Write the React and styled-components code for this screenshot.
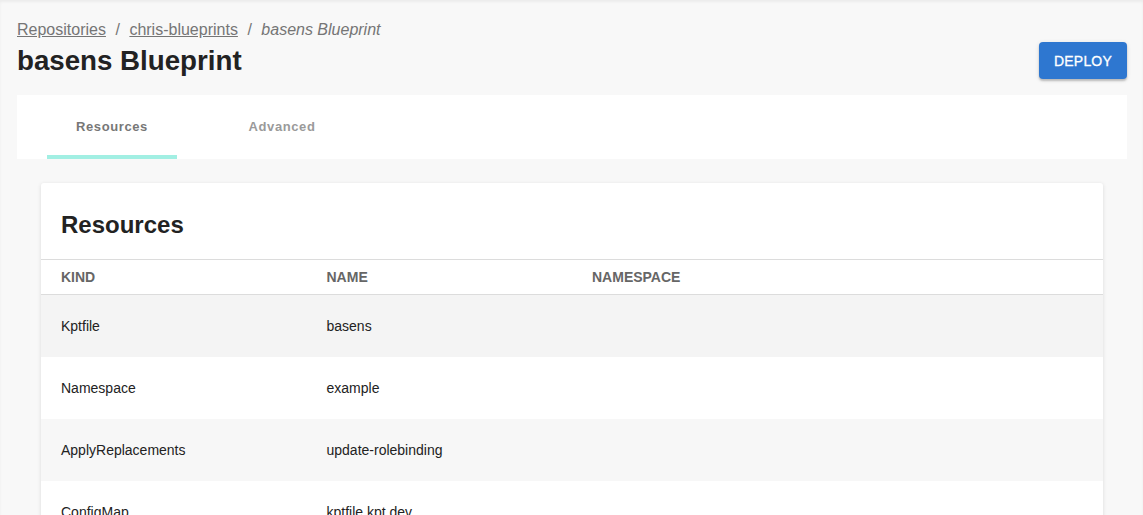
import React from 'react';
import styled, { createGlobalStyle } from 'styled-components';

const GlobalStyle = createGlobalStyle`
    body {
        margin: 0;
        background: #f8f8f8;
        font-family: 'Liberation Sans', Arial, sans-serif;
        color: #222;
    }
`;

const resources = [
    { kind: 'Kptfile', name: 'basens', namespace: '' },
    { kind: 'Namespace', name: 'example', namespace: '' },
    { kind: 'ApplyReplacements', name: 'update-rolebinding', namespace: '' },
    { kind: 'ConfigMap', name: 'kptfile.kpt.dev', namespace: '' },
    { kind: 'RoleBinding', name: 'app-admin', namespace: 'example' },
];

const App = () => {
    return (
        <>
            <GlobalStyle />
            <Page>
                <Breadcrumbs>
                    <Crumb href="#">Repositories</Crumb>
                    <Divider>/</Divider>
                    <Crumb href="#">chris-blueprints</Crumb>
                    <Divider>/</Divider>
                    <Current>basens Blueprint</Current>
                </Breadcrumbs>
                <TitleRow>
                    <Title>basens Blueprint</Title>
                    <DeployButton>Deploy</DeployButton>
                </TitleRow>

                <TabBar>
                    <Tab active>Resources</Tab>
                    <Tab>Advanced</Tab>
                </TabBar>

                <Content>
                    <Card>
                        <CardHeading>Resources</CardHeading>
                        <Table>
                            <thead>
                                <tr>
                                    <HeadCell>Kind</HeadCell>
                                    <HeadCell>Name</HeadCell>
                                    <HeadCell>Namespace</HeadCell>
                                    <HeadCell />
                                </tr>
                            </thead>
                            <tbody>
                                {resources.map((r, i) => (
                                    <Row key={r.kind + r.name} hovered={i === 0}>
                                        <Cell>{r.kind}</Cell>
                                        <Cell>{r.name}</Cell>
                                        <Cell>{r.namespace}</Cell>
                                        <Cell />
                                    </Row>
                                ))}
                            </tbody>
                        </Table>
                    </Card>
                </Content>
            </Page>
        </>
    );
};

export default App;

const Page = styled.div`
    min-height: 100vh;
    padding: 20px 16px 0 17px;
    box-sizing: border-box;
    box-shadow: inset 0 2px 3px rgba(0, 0, 0, 0.05);
`;

const Breadcrumbs = styled.div`
    display: flex;
    align-items: center;
    font-size: 16px;
    line-height: 20px;
    color: #757575;
`;

const Crumb = styled.a`
    color: #757575;
    text-decoration: underline;
`;

const Divider = styled.span`
    margin: 0 9.5px;
`;

const Current = styled.span`
    font-style: italic;
`;

const TitleRow = styled.div`
    display: flex;
    align-items: center;
    justify-content: space-between;
    margin: 2px 0 16px;
`;

const Title = styled.h1`
    margin: 0;
    font-size: 27.7px;
    line-height: 32px;
    font-weight: 700;
    color: #222;
`;

const DeployButton = styled.button`
    width: 88px;
    height: 37px;
    padding: 0;
    border: none;
    border-radius: 4px;
    background: #2e77d0;
    color: #fff;
    font-family: 'Liberation Sans', Arial, sans-serif;
    font-size: 14px;
    letter-spacing: 0.2px;
    -webkit-text-stroke: 0.3px #fff;
    text-transform: uppercase;
    box-shadow: 0 2px 2px rgba(0, 0, 0, 0.2), 0 1px 5px rgba(0, 0, 0, 0.1);
    cursor: pointer;
`;

const TabBar = styled.div`
    display: flex;
    gap: 40px;
    height: 64px;
    padding-left: 30px;
    background: #fff;
`;

const Tab = styled.div`
    width: 130px;
    display: flex;
    align-items: center;
    justify-content: center;
    box-sizing: border-box;
    padding-top: 3px;
    font-size: 13px;
    font-weight: 700;
    letter-spacing: 0.6px;
    color: ${pr => pr.active ? '#777' : '#9a9a9a'};
    border-bottom: 4px solid ${pr => pr.active ? '#a2efe3' : 'transparent'};
`;

const Content = styled.div`
    padding: 24px 24px 0;
`;

const Card = styled.div`
    background: #fff;
    border-radius: 3px;
    box-shadow: 0 1px 4px rgba(0, 0, 0, 0.12);
    overflow: hidden;
`;

const CardHeading = styled.h2`
    margin: 0;
    padding: 24px 20px 16px;
    font-size: 24px;
    line-height: 36px;
    font-weight: 700;
    color: #222;
`;

const Table = styled.table`
    width: 100%;
    border-collapse: collapse;
    table-layout: fixed;
`;

const HeadCell = styled.th`
    height: 34px;
    padding: 0 20px;
    text-align: left;
    font-size: 14px;
    font-weight: 700;
    text-transform: uppercase;
    color: #666;
    border-top: 1px solid #dcdcdc;
    border-bottom: 1px solid #dcdcdc;
`;

const Row = styled.tr`
    background: ${pr => pr.hovered ? '#f4f4f4' : 'transparent'};
    &:nth-child(odd) {
        background: ${pr => pr.hovered ? '#f4f4f4' : '#f7f7f7'};
    }
`;

const Cell = styled.td`
    height: 62px;
    padding: 0 20px;
    font-size: 14px;
    color: #222;
`;
